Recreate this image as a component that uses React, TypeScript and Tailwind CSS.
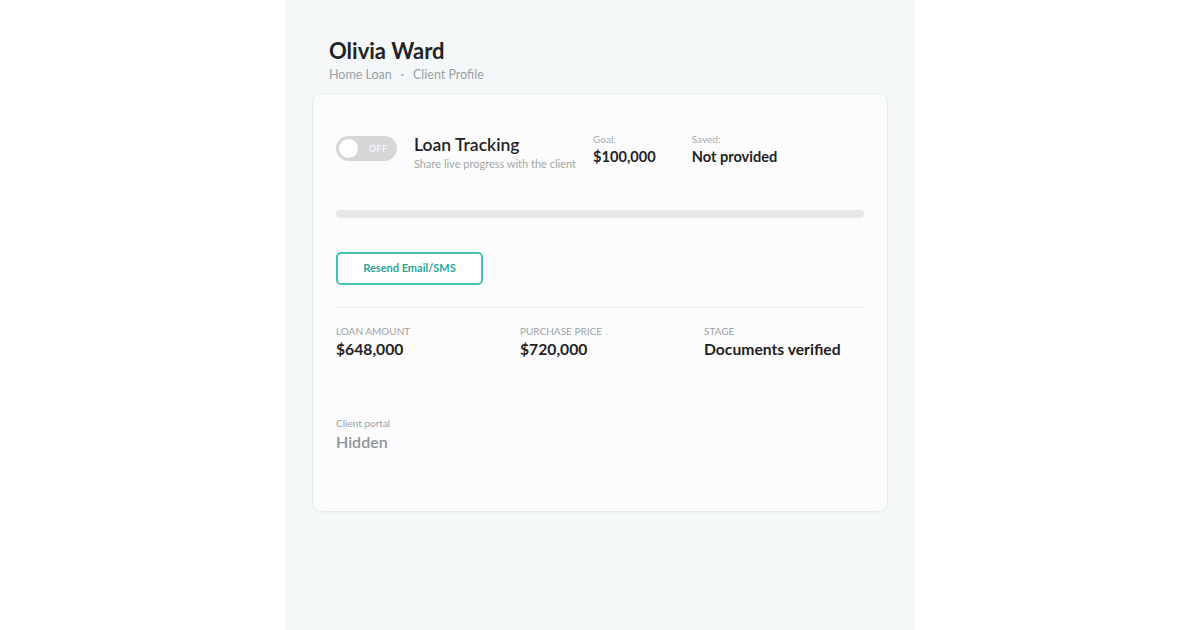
export default function App() {
  return (
    <div className="w-full h-[630px] bg-white flex justify-center" style={{ fontFamily: "Lato, 'Noto Sans', sans-serif" }}>
      <div className="w-[630px] h-full bg-[#f4f8f9] px-[27px] pt-[37px]">
        <div className="pl-[17px]">
          <h1 className="text-[22px] leading-[28px] font-bold text-[#1f2326]">Olivia Ward</h1>
          <div className="mt-[2px] text-[12.5px] leading-[16px] text-[#9aa0a4] flex items-center">
            <span>Home Loan</span>
            <span className="mx-[9px]">·</span>
            <span>Client Profile</span>
          </div>
        </div>
        <div className="mt-[10px] h-[419px] rounded-[9px] border border-[#e3ecee] bg-[#fcfcfc] shadow-[0_1px_3px_rgba(0,0,0,0.04)] px-[23px] pt-[34px]">
          <div className="flex items-start">
            <div className="mt-[8px] w-[61px] h-[25px] rounded-full bg-[#d4d6d8] flex items-center px-[3px]">
              <div className="w-[19px] h-[19px] rounded-full bg-white"></div>
              <span className="ml-[11px] text-[9px] font-bold text-[#f4f4f4] tracking-[0.3px]">OFF</span>
            </div>
            <div className="ml-[17px] mt-[6px]">
              <div className="text-[17.5px] leading-[22px] font-semibold text-[#1f2326]">Loan Tracking</div>
              <div className="text-[11px] leading-[14px] text-[#a0a5a8] mt-[1px]">Share live progress with the client</div>
            </div>
            <div className="ml-[17px] mt-[5px]">
              <div className="text-[10px] leading-[12px] text-[#a7acaf]">Goal:</div>
              <div className="text-[14.6px] leading-[20px] font-bold text-[#1f2326] mt-[2px]">$100,000</div>
            </div>
            <div className="ml-[36px] mt-[5px]">
              <div className="text-[10px] leading-[12px] text-[#a7acaf]">Saved:</div>
              <div className="text-[14.6px] leading-[20px] font-bold text-[#1f2326] mt-[2px]">Not provided</div>
            </div>
          </div>
          <div className="mt-[39px] h-[8px] w-full rounded-full bg-[#e6e8e9]"></div>
          <button className="mt-[34px] w-[147px] h-[33px] rounded-[5px] border-2 border-[#47c2b1] bg-white text-[11px] font-bold text-[#2aa597]">
            Resend Email/SMS
          </button>
          <div className="mt-[22px] h-px w-full bg-[#eef0f1]"></div>
          <div className="mt-[17px] grid grid-cols-[184px_184px_1fr]">
            <div>
              <div className="text-[10px] leading-[12px] text-[#9ca1a5] uppercase">Loan Amount</div>
              <div className="text-[15.7px] leading-[20px] font-bold text-[#1f2326] mt-[2px]">$648,000</div>
            </div>
            <div>
              <div className="text-[10px] leading-[12px] text-[#9ca1a5] uppercase">Purchase Price</div>
              <div className="text-[15.7px] leading-[20px] font-bold text-[#1f2326] mt-[2px]">$720,000</div>
            </div>
            <div>
              <div className="text-[10px] leading-[12px] text-[#9ca1a5] uppercase">Stage</div>
              <div className="text-[15.7px] leading-[20px] font-bold text-[#1f2326] mt-[2px]">Documents verified</div>
            </div>
          </div>
          <div className="mt-[58px]">
            <div className="text-[10px] leading-[12px] text-[#9ca1a5]">Client portal</div>
            <div className="text-[16px] leading-[20px] font-semibold text-[#8f9498] mt-[3px]">Hidden</div>
          </div>
        </div>
      </div>
    </div>
  );
}
